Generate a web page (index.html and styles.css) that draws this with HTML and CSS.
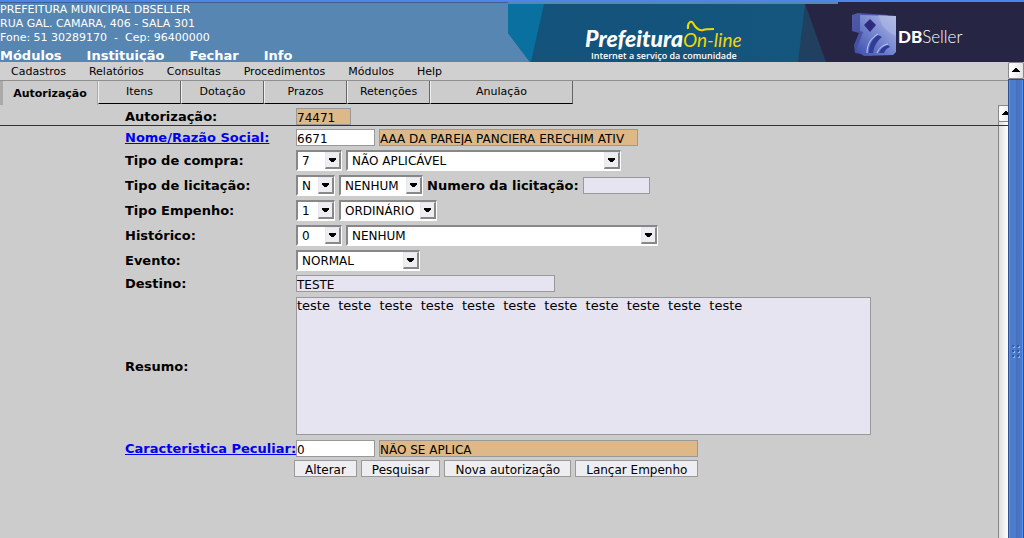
FILE: index.html
```html
<!DOCTYPE html>
<html lang="pt-BR">
<head>
<meta charset="utf-8">
<title>Prefeitura On-line - Autorização de Empenho</title>
<link rel="stylesheet" href="styles.css">
</head>
<body>
<header class="top">
  <div class="top-info">
    <address class="org">PREFEITURA MUNICIPAL DBSELLER<br>RUA GAL. CAMARA, 406 - SALA 301<br>Fone: 51 30289170&nbsp; -&nbsp; Cep: 96400000</address>
    <nav class="top-nav">
      <a href="#">Módulos</a><a href="#">Instituição</a><a href="#">Fechar</a><a href="#">Info</a>
    </nav>
  </div>
  <svg class="banner" width="516" height="60" viewBox="0 0 516 60" role="img" aria-label="Prefeitura On-line, DBSeller">
    <defs>
      <linearGradient id="sea" x1="0" x2="1"><stop offset="0" stop-color="#14527a"/><stop offset="1" stop-color="#13567e"/></linearGradient>
      <linearGradient id="cube" x1="0" y1="1" x2="1" y2="0"><stop offset="0" stop-color="#3b4cae"/><stop offset=".5" stop-color="#7585d0"/><stop offset="1" stop-color="#b2bde5"/></linearGradient>
      <linearGradient id="side" x1="0" y1="0" x2="1" y2="1"><stop offset="0" stop-color="#515aa6"/><stop offset="1" stop-color="#3944a0"/></linearGradient>
    </defs>
    <path fill="url(#sea)" d="M0 2h300v58H22L0 31z"/>
    <path fill="#09709f" d="M0 2h36L23 60h-1L0 31z"/>
    <path fill="#214060" d="M297 2l-7 58h30z"/>
    <path fill="#262544" d="M297 0h219v60H318L297 2z"/>
    <path fill="#5786b2" d="M0 0h330v2H0z"/>
    <path fill="url(#side)" d="M344 13l6-2 30 2-8 16-8 25-17-3-1-8 5-12-7-2z"/>
    <path fill="url(#cube)" d="M352 13l36 1v36l-3 3-29 1-8-5 7-19-3-1z"/>
    <path fill="#b4bee8" opacity=".5" d="M370 13l18 1v20c-5-2-10-5-14-11z"/>
    <path fill="#2e2b7c" d="M356 23l6-6 6 6-6 7z"/>
    <path fill="#303c95" d="M361 51c0-8 3-14 9-18l4 2c-5 4-8 9-9 16zM371 51c2-5 5-7 9-8l2 2c-3 1-5 3-6 6z"/>
    <path fill="none" stroke="#c4ccee" d="M359 51c0-9 4-15 11-19M369 51c2-5 6-8 11-9"/>
    <text class="brand-main" x="77" y="45">Prefeitura</text>
    <text class="brand-online" x="175" y="45">On-line</text>
    <path fill="none" stroke="#f0d800" stroke-width="2" d="M180 27c-1-6 3-9 5-6 2 4 5 8 10 7 3-1 6-1 11-1"/>
    <text class="brand-sub" x="83" y="57">Internet a serviço da comunidade</text>
    <text class="maker" x="390" y="41"><tspan class="maker-db">DB</tspan>Seller</text>
  </svg>
</header>
<div class="workspace">
  <main class="frame">
    <nav class="menu">
      <a href="#">Cadastros</a><a href="#">Relatórios</a><a href="#">Consultas</a><a href="#">Procedimentos</a><a href="#">Módulos</a><a href="#">Help</a>
    </nav>
    <div class="tabs">
      <button class="tab tab-active" type="button">Autorização</button>
      <button class="tab" type="button">Itens</button>
      <button class="tab" type="button">Dotação</button>
      <button class="tab" type="button">Prazos</button>
      <button class="tab" type="button">Retenções</button>
      <button class="tab tab-wide" type="button">Anulação</button>
    </div>
    <div class="panel">
      <form class="form">
        <label for="aut">Autorização:</label>
        <div class="fields"><input id="aut" class="text locked w-code" value="74471" readonly></div>

        <label for="nome"><a href="#">Nome/Razão Social:</a></label>
        <div class="fields"><input id="nome" class="text w-id" value="6671"><input class="text locked w-name" aria-label="Nome" value="AAA DA PAREJA PANCIERA ERECHIM ATIV" readonly></div>

        <label for="compra">Tipo de compra:</label>
        <div class="fields"><span class="pick w-num"><select id="compra"><option>7</option></select></span><span class="pick w-compra"><select aria-label="Descrição do tipo de compra"><option>NÃO APLICÁVEL</option></select></span></div>

        <label for="licit">Tipo de licitação:</label>
        <div class="fields"><span class="pick w-mini"><select id="licit"><option>N</option></select></span><span class="pick w-licit"><select aria-label="Descrição do tipo de licitação"><option>NENHUM</option></select></span><label for="numlic">Numero da licitação:</label><input id="numlic" class="text soft w-numlic"></div>

        <label for="tipoemp">Tipo Empenho:</label>
        <div class="fields"><span class="pick w-mini"><select id="tipoemp"><option>1</option></select></span><span class="pick w-emp"><select aria-label="Descrição do tipo de empenho"><option>ORDINÁRIO</option></select></span></div>

        <label for="hist">Histórico:</label>
        <div class="fields"><span class="pick w-num"><select id="hist"><option>0</option></select></span><span class="pick w-hist"><select aria-label="Descrição do histórico"><option>NENHUM</option></select></span></div>

        <label for="evento">Evento:</label>
        <div class="fields"><span class="pick w-evento"><select id="evento"><option>NORMAL</option></select></span></div>

        <label for="destino">Destino:</label>
        <div class="fields"><input id="destino" class="text soft w-destino" value="TESTE"></div>

        <label for="resumo">Resumo:</label>
        <div class="fields"><textarea id="resumo" class="text soft resumo">teste  teste  teste  teste  teste  teste  teste  teste  teste  teste  teste</textarea></div>

        <label for="carac"><a href="#">Caracteristica Peculiar:</a></label>
        <div class="fields"><input id="carac" class="text w-id" value="0"><input class="text locked w-carac" aria-label="Descrição da característica" value="NÃO SE APLICA" readonly></div>

        <div class="actions">
          <button type="button">Alterar</button><button type="button">Pesquisar</button><button type="button">Nova autorização</button><button type="button">Lançar Empenho</button>
        </div>
      </form>
      <div class="inner-scroll"><span class="arrow-up"></span></div>
      <div class="rule"></div>
    </div>
  </main>
  <aside class="outer-scroll">
    <span class="arrow-up"></span>
    <div class="thumb">
      <svg width="8" height="14" viewBox="0 0 8 14" aria-hidden="true">
        <path fill="#2c5ba8" d="M0 0h2v2H0zM5 0h2v2H5zM0 5h2v2H0zM5 5h2v2H5zM0 10h2v2H0zM5 10h2v2H5z"/>
        <path fill="#8db4f2" d="M2 1h1v2H1V2h1zM7 1h1v2H6V2h1zM2 6h1v2H1V7h1zM7 6h1v2H6V7h1zM2 11h1v2H1v-1h1zM7 11h1v2H6v-1h1z"/>
      </svg>
    </div>
  </aside>
</div>
</body>
</html>
```
FILE: styles.css
```css
*, *::after { box-sizing: border-box; }

body {
  margin: 0;
  height: 100vh;
  display: flex;
  flex-direction: column;
  overflow: hidden;
  background: #ccc;
  color: #000;
  font-family: "DejaVu Sans", sans-serif;
  font-size: 13px;
}

button, input, select, textarea { font: inherit; color: inherit; margin: 0; }

/* Header */
.top {
  display: flex;
  justify-content: space-between;
  height: 62px;
  flex: none;
  background: #5786b2;
  border-top: 2px solid #4b86e8;
  box-shadow: inset 0 1px #3e5f94;
  color: #fff;
}
.top-info { display: flex; flex-direction: column; justify-content: space-between; padding-top: 1px; white-space: nowrap; }
.org { font-size: 11px; line-height: 14px; font-style: normal; }
.top-nav { display: flex; gap: 25px; line-height: 13px; font-weight: bold; }
.top-nav a { color: inherit; text-decoration: none; }
.banner { flex: none; display: block; }
.brand-main { font: italic 900 23px Lato, sans-serif; fill: #fff; }
.brand-online { font: italic 400 19px Lato, sans-serif; fill: #f0d800; }
.brand-sub { font: 600 9px "Open Sans", sans-serif; fill: #fff; }
.maker { font: 300 17px Lato, sans-serif; fill: #fff; }
.maker-db { font-weight: 900; }

/* Workspace */
.workspace { flex: 1; display: flex; min-height: 0; }
.frame { flex: 1; display: flex; flex-direction: column; min-width: 0; }
.menu {
  display: flex;
  gap: 23px;
  padding-left: 11px;
  height: 19px;
  line-height: 19px;
  font-size: 11px;
  background: #d0d0d0;
  border-bottom: 1px solid #909090;
}
.menu a { color: inherit; text-decoration: none; }

.tabs { display: flex; height: 24px; border-left: 3px solid #aaa; }
.tab {
  width: 83px;
  height: 23px;
  padding: 0 0 2px;
  font-size: 11px;
  background: #ccc;
  border: 0 solid;
  border-width: 0 1px 1px;
  border-color: #000 #666 #000 #eee;
}
.tab-active {
  width: 95px;
  height: 24px;
  padding: 1px 0 0;
  font-weight: bold;
  border-color: #aaa;
  border-width: 0 1px 0 0;
}
.tab-wide { width: 143px; }

.panel { flex: 1; display: flex; justify-content: space-between; position: relative; }
.rule { position: absolute; top: 20px; left: 0; right: 0; height: 1px; background: #333; }

/* Form */
.form {
  display: grid;
  grid-template-columns: 167px auto;
  gap: 4px;
  align-content: start;
  align-items: center;
  padding: 3px 0 0 125px;
}
label { font-weight: bold; line-height: 17px; white-space: nowrap; }
label a { color: #00e; }
.fields { display: flex; align-items: center; gap: 4px; }
.text {
  height: 17px;
  padding: 2px 0 0;
  line-height: 14px;
  font-size: 12px;
  background: #fff;
  border: 1px solid #999;
  border-radius: 0;
}
.locked { background: #deb887; }
.soft { background: #e6e4f1; }
.resumo { width: 575px; height: 138px; margin: 1px 0; padding: 0; line-height: 15px; font-size: 13px; resize: none; display: block; }

.pick {
  display: grid;
  height: 21px;
  background: #fff;
  border: solid;
  border-width: 2px 1px 2px 2px;
  border-color: #888 #fff #fff #888;
}
.pick select {
  grid-area: 1 / 1;
  appearance: none;
  width: 100%;
  height: 17px;
  padding: 1px 0 0 4px;
  font-size: 12px;
  line-height: 16px;
  background: #fff;
  border: 0;
  border-radius: 0;
}
.pick::after {
  content: "";
  grid-area: 1 / 1;
  justify-self: end;
  align-self: center;
  width: 16px;
  height: 17px;
  pointer-events: none;
  border: solid;
  border-width: 1px 2px 2px 1px;
  border-color: #e8e8ec #888 #888 #e8e8ec;
  background:
    linear-gradient(#000, #000) 3px 5px / 7px 1px no-repeat,
    linear-gradient(#000, #000) 3px 6px / 7px 1px no-repeat,
    linear-gradient(#000, #000) 4px 7px / 5px 1px no-repeat,
    linear-gradient(#000, #000) 5px 8px / 3px 1px no-repeat,
    #eceef2;
}

.w-code { width: 55px; }
.w-id { width: 79px; }
.w-name { width: 259px; }
.w-num { width: 46px; }
.w-mini { width: 39px; }
.w-compra { width: 275px; }
.w-licit { width: 84px; }
.w-emp { width: 98px; }
.w-hist { width: 312px; }
.w-evento { width: 124px; }
.w-numlic { width: 67px; }
.w-destino { width: 259px; }
.w-carac { width: 319px; }

.actions { grid-column: 2; display: flex; gap: 4px; margin: -1px 0 0 -2px; }
.actions button {
  height: 17px;
  padding: 2px 10px 0;
  line-height: 14px;
  font-size: 12px;
  background: #eeeef2;
  border: 1px solid #999;
}

/* Scrollbars */
.inner-scroll {
  width: 10px;
  flex: none;
  overflow: hidden;
  border-left: 1px solid #888;
  background: linear-gradient(90deg, #ddd, #fff);
}
.outer-scroll { width: 16px; flex: none; display: flex; flex-direction: column; }
.arrow-up {
  display: block;
  flex: none;
  width: 16px;
  height: 17px;
  border: 1px solid #888;
  border-radius: 2px;
  background:
    linear-gradient(#000, #000) 50% 5px / 2px 1px no-repeat,
    linear-gradient(#000, #000) 50% 6px / 4px 1px no-repeat,
    linear-gradient(#000, #000) 50% 7px / 6px 1px no-repeat,
    linear-gradient(#000, #000) 50% 8px / 8px 1px no-repeat,
    linear-gradient(90deg, #fff, #e4e4e4);
}
.inner-scroll .arrow-up { margin-left: -1px; }
.thumb {
  flex: 1;
  display: grid;
  justify-content: center;
  align-content: center;
  padding-top: 86px;
  border: solid;
  border-width: 1px 1px 0;
  border-color: #2c4f91;
  box-shadow: inset 1px 0 #5a91ee, inset -1px 0 #5a91ee;
  background: linear-gradient(90deg, #4d7bce 50%, #4470bb 50%, #4d7bce);
}
```
